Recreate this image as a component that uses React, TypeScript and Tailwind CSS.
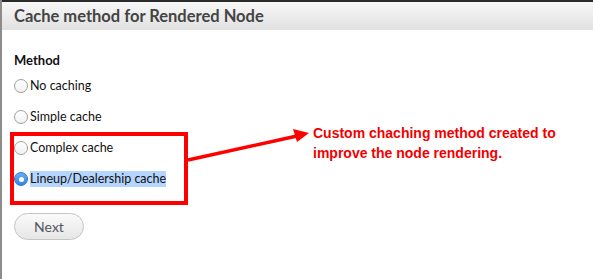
import React from 'react';

const options = [
  { label: 'No caching', checked: false },
  { label: 'Simple cache', checked: false },
  { label: 'Complex cache', checked: false },
  { label: 'Lineup/Dealership cache', checked: true },
];

const Radio: React.FC<{ checked: boolean }> = ({ checked }) =>
  checked ? (
    <span className="flex h-[14px] w-[14px] shrink-0 items-center justify-center rounded-full border border-[#2a77d0] bg-gradient-to-b from-[#6aaef5] to-[#2f86e6]">
      <span className="h-[5px] w-[5px] rounded-full bg-white" />
    </span>
  ) : (
    <span className="h-[14px] w-[14px] shrink-0 rounded-full border border-[#a0a0a0] bg-gradient-to-b from-white to-[#f1f1f1]" />
  );

const App: React.FC = () => {
  return (
    <div className="relative flex h-[279px] w-[593px] overflow-hidden bg-white font-['Lato',sans-serif]">
      {/* left edge of the page behind */}
      <div className="w-[2px] shrink-0 bg-[#8c8c8c]" />

      <div className="flex flex-1 flex-col">
        <div className="h-[2px] bg-[#2b2b2b]" />
        {/* Dialog header */}
        <div className="flex h-[28px] items-center bg-gradient-to-b from-[#f7f7f7] to-[#e1e1e1] pl-[12px]">
          <h1 className="text-[16.5px] font-bold text-[#444]">Cache method for Rendered Node</h1>
        </div>

        {/* Dialog body */}
        <div className="flex flex-col pl-[12px] pt-[23px]">
          <div className="text-[13px] font-bold leading-[15px] text-[#111]">Method</div>
          <div className="mt-[10px] flex flex-col gap-[15px]">
            {options.map((o) => (
              <label key={o.label} className="flex h-[16px] items-center gap-[2px] text-[12.5px] text-[#111]">
                <Radio checked={o.checked} />
                <span className={o.checked ? 'bg-[#b4d5fe] leading-[16px]' : 'leading-[16px]'}>{o.label}</span>
              </label>
            ))}
          </div>

          <button className="mt-[26px] h-[27px] w-[70px] rounded-full border border-[#c4c4c4] bg-gradient-to-b from-[#fafafa] to-[#e6e6e6] text-[14px] text-[#4f5563] shadow-[0_1px_0_#fff]">
            Next
          </button>
        </div>
      </div>

      {/* Annotation box */}
      <div className="absolute left-[10px] top-[132px] h-[73px] w-[178px] border-[4px] border-[#ff0000]" />

      {/* Annotation arrow */}
      <svg className="absolute left-0 top-0" width="593" height="279" viewBox="0 0 593 279">
        <line x1="188" y1="160" x2="297" y2="136" stroke="#ff0000" strokeWidth="3.5" />
        <polygon points="309,133 293,129 297,142" fill="#ff0000" />
      </svg>

      {/* Annotation text */}
      <div className="absolute left-[313px] top-[123px] font-['Liberation_Sans',sans-serif] text-[14px] font-bold leading-[20px] text-[#f20000]">
        <div>Custom chaching method created to</div>
        <div>improve the node rendering.</div>
      </div>
    </div>
  );
};

export default App;
